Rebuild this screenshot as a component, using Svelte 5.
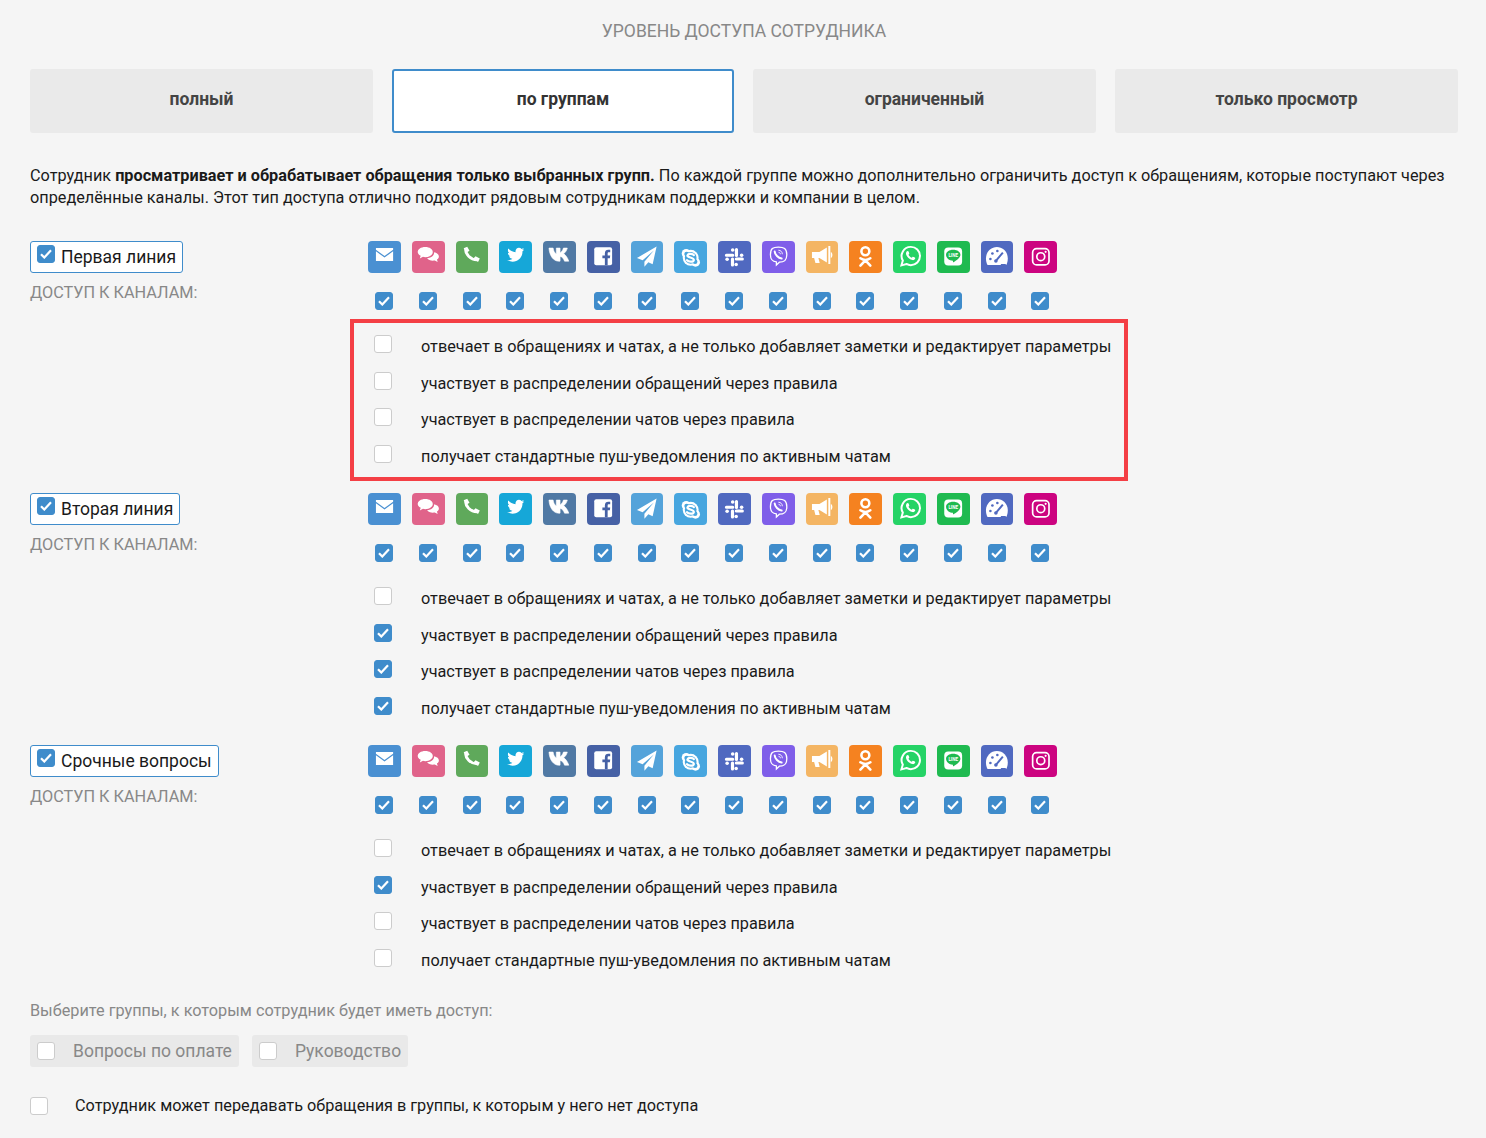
<script>
  const channels = [
    { name: 'email', bg: '#4a90d2', svg: '<path fill="#fff" d="M8 7h17.300v1.600l-8.650 6.400L8 8.600z"/><path fill="#fff" d="M8 10.200l8.650 6.400 8.650-6.400V20H8z"/>' },
    { name: 'chat', bg: '#e0638a', svg: '<g transform="translate(.4 .2) scale(.96 .88)"><path fill="#fff" d="M13.500 6.500c4.600 0 7.900 2.600 7.900 5.800s-3.300 5.800-7.900 5.800c-.9 0-1.700-.1-2.400-.3l-3.300 2 .9-3.300C6.600 15.400 5.600 14 5.600 12.300c0-3.200 3.300-5.800 7.900-5.800z"/><path fill="#fff" d="M22.800 12.500c3 .7 5 2.500 5 4.800 0 1.400-.8 2.700-2 3.500l.7 3-3-1.800c-.6.1-1.300.2-2 .2-2.700 0-5-1.100-6.100-2.900 4.200-.1 7.600-2.900 7.400-6.800z"/></g>' },
    { name: 'phone', bg: '#5fa95b', svg: '<path fill="none" stroke="#fff" stroke-width="2.800" d="M9.800 8C9 12.500 14.500 19 21.500 18.800"/><path fill="#fff" d="M7.700 7.300L11.300 5.700l2.300 4-2.800 1.700zM17.500 17.500l2.200-2.300 4.300 2.400-1.800 3.400z"/>' },
    { name: 'twitter', bg: '#16a7d8', svg: '<path fill="#fff" transform="translate(7 3.500) scale(.82)" d="M22.460,6C21.690,6.350 20.860,6.580 20,6.690C20.880,6.160 21.560,5.320 21.880,4.310C21.050,4.810 20.130,5.160 19.160,5.360C18.370,4.500 17.260,4 16,4C13.650,4 11.730,5.920 11.730,8.290C11.730,8.630 11.770,8.960 11.840,9.270C8.280,9.090 5.110,7.380 3,4.790C2.630,5.420 2.420,6.160 2.420,6.940C2.420,8.430 3.170,9.750 4.330,10.500C3.620,10.500 2.960,10.300 2.380,10C2.380,10 2.380,10 2.380,10.030C2.380,12.110 3.860,13.850 5.820,14.240C5.460,14.340 5.080,14.390 4.690,14.390C4.420,14.390 4.150,14.360 3.890,14.310C4.430,16 6,17.260 7.890,17.290C6.430,18.450 4.580,19.130 2.560,19.130C2.220,19.130 1.880,19.110 1.540,19.070C3.440,20.290 5.700,21 8.120,21C16,21 20.330,14.460 20.330,8.790C20.330,8.600 20.330,8.420 20.320,8.230C21.160,7.630 21.880,6.870 22.460,6Z"/>' },
    { name: 'vk', bg: '#5079a4', svg: '<path fill="#fff" stroke="#fff" stroke-width=".6" d="M6 7h4.200c.3 2.700 1.700 5.300 3.200 5.900V7h3.800v4.900C18.700 11.100 20 9 20.600 7h3.900c-.5 2.500-2.300 4.700-3.700 5.800 1.700.9 3.700 3.200 5.200 7.400h-4.300c-.9-2.700-2.400-4.400-4.500-4.800v4.800h-1.500C10.700 20.200 6.500 15 6 7z"/>' },
    { name: 'facebook', bg: '#4661a5', svg: '<rect x="7.300" y="6.300" width="18" height="18" rx="2" fill="#fff"/><path fill="#4661a5" d="M18 24.300v-7h-2.500v-2.800H18v-2.400c0-2.400 1.500-3.500 3.400-3.500h2v2.700h-1.400c-.9 0-1.200.5-1.200 1.300v1.900h2.600l-.4 2.800h-2.200v7z"/>' },
    { name: 'telegram', bg: '#54a3da', svg: '<path fill="#fff" d="M25.800 5.500L6 17l5.700 2.200L23 9.500l-9.500 11.300v5l4-4.500 4.300 2z"/>' },
    { name: 'skype', bg: '#47a6df', svg: '<g fill="#fff"><circle cx="16.800" cy="16.800" r="8"/><circle cx="12.300" cy="12.500" r="4.500"/><circle cx="21.700" cy="21.200" r="4.500"/></g><g fill="#47a6df"><circle cx="16.800" cy="16.800" r="5.900"/><circle cx="12.800" cy="13" r="2.400"/><circle cx="21.200" cy="20.700" r="2.400"/></g><path fill="none" stroke="#fff" stroke-width="2.200" stroke-linecap="round" d="M20 14.200c-1-1.500-5.700-2-6.400.1-.8 2.500 6.600 1.900 6.400 4.800-.3 2.200-5.600 2.100-6.900.1"/>' },
    { name: 'slack', bg: '#5069c0', svg: '<g fill="none" stroke="#fff" stroke-width="3.200" stroke-linecap="round"><path d="M8.500 14.200h6.300M18.600 8.500v6M24.500 18h-6M14.600 24v-6"/></g><g fill="#fff"><circle cx="14.800" cy="9" r="1.800"/><circle cx="23.800" cy="14.200" r="1.800"/><circle cx="18.300" cy="23.500" r="1.800"/><circle cx="9.200" cy="18.200" r="1.800"/></g>' },
    { name: 'viber', bg: '#7f5ee9', svg: '<path fill="none" stroke="#fff" stroke-width="1.300" d="M16.500 6c5.500 0 8.500 1.500 8.500 7.700 0 6.200-3 7.500-7.500 7.500l-3 2.800v-3c-3.500-.6-6-1.800-6-7.300C8.500 7.500 11 6 16.500 6z"/><path fill="none" stroke="#fff" stroke-width="2" stroke-linecap="round" d="M12.800 10.500c.3 3 3.500 6.500 7 7"/><path fill="none" stroke="#fff" stroke-width=".9" d="M16.500 9.200c2.400 0 4 1.700 4 4M16.700 11.300c1 0 1.800.8 1.800 1.900"/>' },
    { name: 'announce', bg: '#f4b563', svg: '<path fill="#fff" d="M6 11h7.500L21 6.500v15l-7.500-4.500h-1l1.300 5H9.500L8.200 17H6z"/><path fill="#fff" d="M22.500 5h2v18h-2z"/><path fill="#fff" d="M25 11c1.300.4 1.600 2 1.600 3s-.3 2.600-1.600 3z"/>' },
    { name: 'ok', bg: '#f58220', svg: '<circle cx="16.500" cy="10.200" r="4" fill="none" stroke="#fff" stroke-width="2.600"/><path fill="none" stroke="#fff" stroke-width="2.600" stroke-linecap="round" d="M11.500 17.300c3 2 7 2 10 0M16.500 19.300l-5 5.300M16.500 19.300l5 5.300"/>' },
    { name: 'whatsapp', bg: '#25d366', svg: '<g transform="translate(1.500 -1)"><path fill="none" stroke="#fff" stroke-width="2" d="M16.500 6.800a9.200 9.200 0 0 1 0 18.400c-1.600 0-3.100-.4-4.500-1.200l-5 1.400 1.400-4.800a9.200 9.200 0 0 1 8.100-13.800z"/><path fill="#fff" d="M13.300 11c.6 0 .8.200 1 .7l.6 1.600c.1.400-.6 1.100-.8 1.400.8 1.500 1.800 2.400 3.200 3.100.5-.4.900-1.200 1.300-1.100l1.900.9c.4.300.4.600.3 1.200-.5 1.200-1.800 1.500-2.700 1.300-3.400-.7-5.900-3.400-6.500-6.100-.2-1.300.6-3 1.700-3z"/></g>' },
    { name: 'line', bg: '#1fba50', svg: '<rect x="7.300" y="6.500" width="18" height="18" rx="4" fill="#fff"/><path fill="#1fba50" d="M16.300 8.700c4.200 0 7.300 2.200 7.300 5.100 0 2.800-3.500 5.500-7 7.600-.5.200-.6-.2-.5-1.500-3.800-.2-7-2.800-7-6.100 0-2.900 3-5.100 7.200-5.100z"/><text x="16.300" y="15.700" text-anchor="middle" fill="#fff" font-family="Roboto, sans-serif" font-weight="700" font-size="4.600">LINE</text>' },
    { name: 'gauge', bg: '#5069c0', svg: '<path fill="#fff" d="M16 6C10 6 5 10.800 5 17.500c0 2.500.6 5 1.600 6.500h18.800c1-1.500 1.600-4 1.600-6.500C27 10.800 22 6 16 6z"/><g fill="#5069c0"><circle cx="9.500" cy="18" r="1.300"/><circle cx="11.500" cy="12.500" r="1.300"/><circle cx="16.500" cy="10" r="1.300"/><circle cx="15" cy="20" r="1.800"/></g><path stroke="#5069c0" stroke-width="2" d="M15 20l7-8.500M20 24h5"/>' },
    { name: 'instagram', bg: '#cc0480', svg: '<rect x="8.700" y="7.500" width="16.500" height="16.500" rx="4" fill="none" stroke="#fff" stroke-width="1.700"/><circle cx="16.900" cy="15.700" r="4" fill="none" stroke="#fff" stroke-width="1.700"/><circle cx="21.800" cy="10.800" r="1.100" fill="#fff"/>' }
  ]

  const optionLabels = [
    'отвечает в обращениях и чатах, а не только добавляет заметки и редактирует параметры',
    'участвует в распределении обращений через правила',
    'участвует в распределении чатов через правила',
    'получает стандартные пуш-уведомления по активным чатам'
  ]

  const groups = [
    { title: 'Первая линия', options: [false, false, false, false], marked: true },
    { title: 'Вторая линия', options: [false, true, true, true] },
    { title: 'Срочные вопросы', options: [false, true, false, false] }
  ]

  const levels = ['полный', 'по группам', 'ограниченный', 'только просмотр']
  let level = 1
</script>

{#snippet check(on)}
  <span class="check" class:on>
    {#if on}
      <svg width="12" height="10" viewBox="0 0 12 10"><path d="M1 5.200L4.300 8.500 11 1.300" fill="none" stroke="white" stroke-width="2.200"/></svg>
    {/if}
  </span>
{/snippet}

<div class="page">
  <h2>УРОВЕНЬ ДОСТУПА СОТРУДНИКА</h2>

  <div class="levels">
    {#each levels as item, i}
      <button class:active={i === level} on:click={() => (level = i)}>{item}</button>
    {/each}
  </div>

  <p class="description">
    Сотрудник <b>просматривает и обрабатывает обращения только выбранных групп.</b> По каждой группе можно дополнительно ограничить доступ к обращениям, которые поступают через определённые каналы. Этот тип доступа отлично подходит рядовым сотрудникам поддержки и компании в целом.
  </p>

  {#each groups as group}
    <section class="group">
      <div class="group-side">
        <label class="group-title">
          {@render check(true)}
          <span>{group.title}</span>
        </label>
        <div class="channels-label">ДОСТУП К КАНАЛАМ:</div>
      </div>

      <div class="group-main">
        <div class="channels">
          {#each channels as channel}
            <div class="channel">
              <svg class="icon" viewBox="0 0 33 32" style="background: {channel.bg}">{@html channel.svg}</svg>
              {@render check(true)}
            </div>
          {/each}
        </div>

        <div class="options">
          {#each group.options as on, i}
            <div class="option">
              {@render check(on)}
              <span>{optionLabels[i]}</span>
            </div>
          {/each}
        </div>
      </div>

      {#if group.marked}
        <div class="marker"></div>
      {/if}
    </section>
  {/each}

  <div class="select-label">Выберите группы, к которым сотрудник будет иметь доступ:</div>
  <div class="chips">
    <div class="chip">{@render check(false)}<span>Вопросы по оплате</span></div>
    <div class="chip">{@render check(false)}<span>Руководство</span></div>
  </div>

  <div class="transfer">
    {@render check(false)}
    <span>Сотрудник может передавать обращения в группы, к которым у него нет доступа</span>
  </div>
</div>

<style>
  :global(body) {
    background: #f5f5f5;
    font-family: Roboto, sans-serif;
    color: #1a1a1a;
  }

  .page {
    padding: 20px 28px 0 30px;
    height: 1118px;
    overflow: hidden;
  }

  h2 {
    margin: 0;
    font-size: 17.5px;
    line-height: 22px;
    font-weight: 400;
    text-align: center;
    color: #888;
  }

  .levels {
    display: grid;
    grid-template-columns: 343px 342px 343px 343px;
    gap: 19px;
    margin-top: 27px;
  }

  .levels button {
    height: 64px;
    padding: 0 0 4px;
    border: 2px solid #eaeaea;
    border-radius: 3px;
    background: #eaeaea;
    font: 700 17.5px Roboto, sans-serif;
    color: #444;
  }

  .levels button.active {
    background: #fff;
    border-color: #3f8ccb;
    color: #333;
  }

  .description {
    margin: 32px 0 0;
    font-size: 16.25px;
    line-height: 22px;
  }

  .group {
    position: relative;
    display: flex;
    height: 252px;
  }

  .description + .group {
    margin-top: 32px;
  }

  .group-side {
    width: 338px;
    flex: none;
  }

  .group-title {
    display: inline-flex;
    align-items: center;
    gap: 6px;
    height: 32px;
    box-sizing: border-box;
    padding: 0 6px;
    border: 1px solid #3f8ccb;
    border-radius: 3px;
    background: #fff;
    font-size: 17.5px;
  }

  .group-title .check {
    position: relative;
    top: -3px;
  }

  .channels-label {
    margin-top: 9px;
    font-size: 16.25px;
    line-height: 22px;
    color: #888;
  }

  .channels {
    display: grid;
    grid-template-columns: repeat(16, 32.75px);
    gap: 11px;
  }

  .channel {
    display: flex;
    flex-direction: column;
    align-items: center;
    gap: 19px;
  }

  .channel .check {
    margin-right: 0.5px;
  }

  .icon {
    display: block;
    width: 32.75px;
    height: 32px;
    border-radius: 4px;
  }

  .check {
    display: inline-flex;
    align-items: center;
    justify-content: center;
    flex: none;
    box-sizing: border-box;
    width: 18px;
    height: 18px;
    border: 1px solid #ccc;
    border-radius: 3px;
    background: #fff;
  }

  .check.on {
    border-color: #3f8ccb;
    background: #3f8ccb;
  }

  .options {
    margin-top: 18.5px;
  }

  .option {
    display: flex;
    align-items: center;
    height: 36.5px;
    font-size: 16.25px;
    gap: 29px;
    padding-left: 6px;
  }

  .option .check {
    position: relative;
    top: -2.5px;
  }

  .marker {
    position: absolute;
    top: 78px;
    left: 320px;
    width: 778px;
    height: 162px;
    box-sizing: border-box;
    border: 4px solid #f43f45;
    pointer-events: none;
  }

  .select-label {
    margin-top: 3px;
    font-size: 16.25px;
    line-height: 22px;
    color: #888;
  }

  .chips {
    display: flex;
    gap: 13px;
    margin-top: 13px;
  }

  .chip {
    display: flex;
    align-items: center;
    gap: 18px;
    height: 32px;
    padding: 0 7px;
    border-radius: 3px;
    background: #e9e9e9;
    font-size: 17.5px;
    color: #888;
  }

  .transfer {
    display: flex;
    align-items: center;
    gap: 27px;
    margin-top: 29px;
    font-size: 16.25px;
  }
</style>
